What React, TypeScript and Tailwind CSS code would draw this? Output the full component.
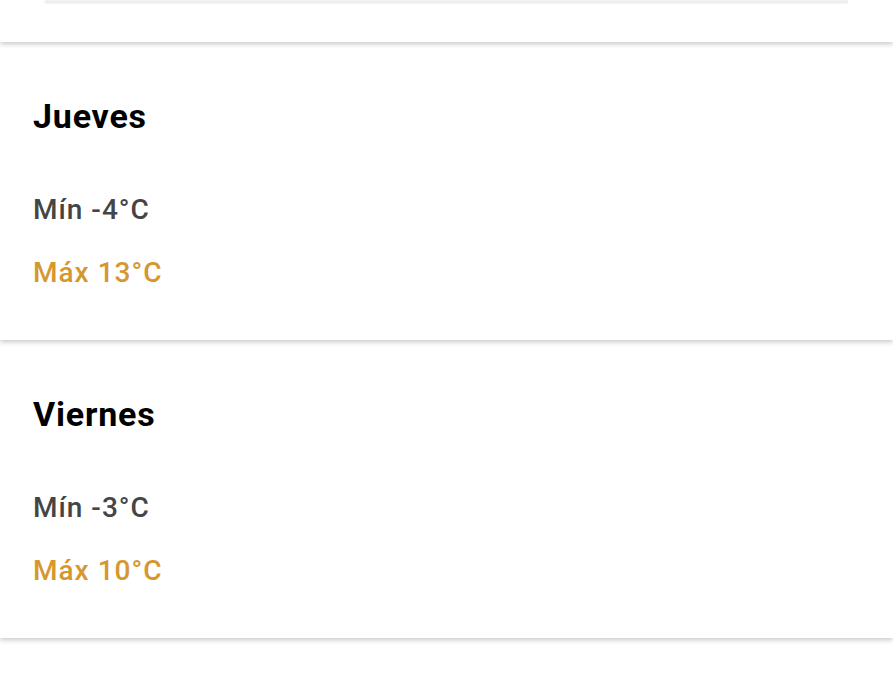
const days = [
  { name: 'Jueves', min: '-4', max: '13' },
  { name: 'Viernes', min: '-3', max: '10' },
];

export default function App() {
  return (
    <div className="h-[675px] w-full overflow-hidden bg-white font-['Roboto',sans-serif]">
      <div className="relative z-30 h-[42px] bg-white shadow-[0_2px_5px_rgba(0,0,0,0.22)]">
        <div className="mx-[45px] h-[2px] bg-[#f1f1f1] shadow-[0_1px_2px_rgba(0,0,0,0.12)]" />
      </div>

      {days.map((d, i) => (
        <div
          key={d.name}
          className={`relative h-[298px] bg-white px-[33px] pt-[55px] shadow-[0_2px_5px_rgba(0,0,0,0.22)] ${i === 0 ? 'z-20' : 'z-10'}`}
        >
          <h2 className="text-[34px] font-bold leading-[38px] tracking-[0.8px] text-black">{d.name}</h2>
          <p className="mt-[59px] text-[28px] font-medium leading-[32px] tracking-[1px] text-[#454545]">
            Mín {d.min}°C
          </p>
          <p className="mt-[31px] text-[28px] font-medium leading-[32px] tracking-[1px] text-[#d6972f]">
            Máx {d.max}°C
          </p>
        </div>
      ))}
    </div>
  );
}
